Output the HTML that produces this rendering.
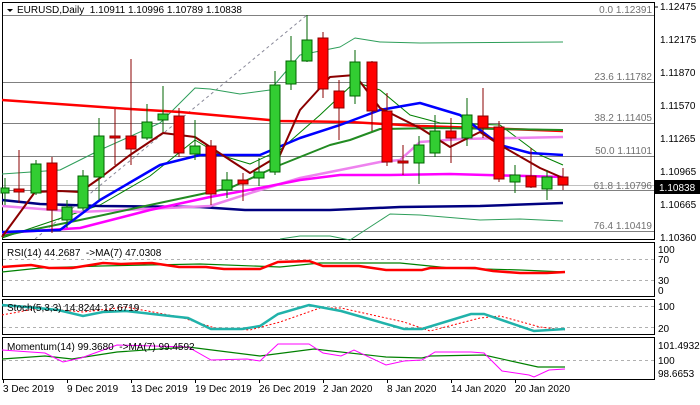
<!DOCTYPE html><html><head><meta charset="utf-8"><style>
body{margin:0;width:700px;height:400px;background:#fff;overflow:hidden}
text{font-family:"Liberation Sans","DejaVu Sans",sans-serif;font-size:10px;fill:#000}
</style></head><body>
<svg width="700" height="400" xmlns="http://www.w3.org/2000/svg">
<g fill="none" stroke="#000" stroke-width="1">
<rect x="2.5" y="2.5" width="652" height="237"/>
<rect x="2.5" y="242.5" width="652" height="54"/>
<rect x="2.5" y="299.5" width="652" height="35"/>
<rect x="2.5" y="337.5" width="652" height="42"/>
</g>
<g stroke="#808080" stroke-width="1">
<line x1="3" y1="15.5" x2="654" y2="15.5"/><line x1="3" y1="82.5" x2="654" y2="82.5"/>
<line x1="3" y1="123.5" x2="654" y2="123.5"/><line x1="3" y1="156.5" x2="654" y2="156.5"/>
<line x1="3" y1="190.5" x2="654" y2="190.5"/><line x1="3" y1="231.5" x2="654" y2="231.5"/>
</g>
<line x1="3" y1="185.5" x2="654" y2="185.5" stroke="#c0c0c0"/>
<line x1="35" y1="239" x2="307" y2="15" stroke="#8a8a9a" stroke-dasharray="3,3"/>
<g text-anchor="end"><text x="652" y="13" style="fill:#707070">0.0 1.12391</text>
<text x="652" y="80" style="fill:#707070">23.6 1.11782</text><text x="652" y="121" style="fill:#707070">38.2 1.11405</text>
<text x="652" y="154" style="fill:#707070">50.0 1.11101</text><text x="652" y="189" style="fill:#707070">61.8 1.10796</text>
<text x="652" y="229" style="fill:#707070">76.4 1.10419</text></g>
<g fill="none" stroke-linejoin="round">
<polyline stroke="#2e9e5a" stroke-width="1" points="2,174 60,170 100,150 160,123 195,88 210,89 240,94 270,90 300,55 340,47 355,38 380,42 420,43 563,42"/>
<polyline stroke="#2e9e5a" stroke-width="1" points="280,239 300,236 330,236 350,240 390,214 420,215 480,220 520,219 563,221"/>
<polyline stroke="#008000" stroke-width="1" points="2,238 100,205 150,176 195,140 220,155 250,164 280,150 320,115 355,82 380,90 410,115 440,123 500,125 540,155 563,165"/>
<polyline stroke="#ff0000" stroke-width="2.5" points="2,100 130,109 180,112 280,121 350,122 420,126 480,128 563,131"/>
<polyline stroke="#000080" stroke-width="2.5" points="2,200 40,204 100,206 200,207 245,210 330,210 400,207 480,206 563,203"/>
<polyline stroke="#ee82ee" stroke-width="2.5" points="2,206 80,212 210,206 260,190 300,178 340,170 380,162 400,160 420,142 460,139 563,137"/>
<polyline stroke="#ff00ff" stroke-width="2.5" points="2,233 80,228 150,210 210,197 260,188 300,180 340,175 390,175 450,174 563,177"/>
<polyline stroke="#228b22" stroke-width="2" points="2,236 80,220 150,205 230,188 280,165 330,145 350,140 380,129 440,128 563,130"/>
<polyline stroke="#0000ff" stroke-width="2.5" points="2,232 60,230 100,200 160,165 200,155 260,155 300,138 340,125 380,110 420,103 460,115 500,145 530,153 563,155"/>
<polyline stroke="#8b0000" stroke-width="2" points="2,237 35,192 60,191 80,192 100,178 130,155 163,133 195,137 230,160 250,173 280,155 300,110 330,77 355,75 380,108 420,128 450,147 480,132 500,145 540,168 563,178"/>
</g>
<g stroke-width="1">
<g stroke="#006400" fill="#32cd32">
<line x1="5" y1="178" x2="5" y2="205"/><rect x="1" y="188" width="8" height="5"/>
<line x1="36" y1="160" x2="36" y2="195"/><rect x="31" y="164" width="10" height="29"/>
<line x1="67" y1="200" x2="67" y2="228"/><rect x="62" y="207" width="10" height="13"/>
<line x1="83" y1="170" x2="83" y2="210"/><rect x="78" y="176" width="10" height="32"/>
<line x1="99" y1="118" x2="99" y2="200"/><rect x="94" y="136" width="10" height="41"/>
<line x1="147" y1="104" x2="147" y2="140"/><rect x="142" y="122" width="10" height="16"/>
<line x1="163" y1="86" x2="163" y2="132"/><rect x="158" y="114" width="10" height="6"/>
<line x1="195" y1="120" x2="195" y2="160"/><rect x="190" y="146" width="10" height="8"/>
<line x1="227" y1="172" x2="227" y2="198"/><rect x="222" y="180" width="10" height="10"/>
<line x1="259" y1="158" x2="259" y2="186"/><rect x="254" y="172" width="10" height="6"/>
<line x1="275" y1="71" x2="275" y2="175"/><rect x="270" y="85" width="10" height="87"/>
<line x1="291" y1="36" x2="291" y2="90"/><rect x="286" y="61" width="10" height="23"/>
<line x1="307" y1="15" x2="307" y2="62"/><rect x="302" y="40" width="10" height="21"/>
<line x1="355" y1="50" x2="355" y2="104"/><rect x="350" y="62" width="10" height="34"/>
<line x1="419" y1="136" x2="419" y2="184"/><rect x="414" y="145" width="10" height="18"/>
<line x1="435" y1="115" x2="435" y2="157"/><rect x="430" y="131" width="10" height="22"/>
<line x1="467" y1="98" x2="467" y2="146"/><rect x="462" y="115" width="10" height="23"/>
<line x1="515" y1="165" x2="515" y2="193"/><rect x="510" y="175" width="10" height="7"/>
<line x1="547" y1="170" x2="547" y2="200"/><rect x="542" y="177" width="10" height="12"/>
</g>
<g stroke="#8b0000" fill="#ff0000">
<line x1="19" y1="150" x2="19" y2="203"/><rect x="14" y="189" width="10" height="3"/>
<line x1="52" y1="157" x2="52" y2="233"/><rect x="47" y="163" width="10" height="47"/>
<line x1="115" y1="109" x2="115" y2="165"/><rect x="110" y="136" width="10" height="2"/>
<line x1="131" y1="59" x2="131" y2="165"/><rect x="126" y="136" width="10" height="13"/>
<line x1="179" y1="108" x2="179" y2="157"/><rect x="174" y="116" width="10" height="37"/>
<line x1="211" y1="140" x2="211" y2="205"/><rect x="206" y="146" width="10" height="48"/>
<line x1="243" y1="173" x2="243" y2="201"/><rect x="238" y="180" width="10" height="4"/>
<line x1="323" y1="32" x2="323" y2="98"/><rect x="318" y="38" width="10" height="51"/>
<line x1="339" y1="80" x2="339" y2="140"/><rect x="334" y="91" width="10" height="17"/>
<line x1="372" y1="61" x2="372" y2="131"/><rect x="367" y="62" width="10" height="49"/>
<line x1="387" y1="93" x2="387" y2="166"/><rect x="382" y="111" width="10" height="51"/>
<line x1="403" y1="145" x2="403" y2="175"/><rect x="398" y="161" width="10" height="2"/>
<line x1="451" y1="118" x2="451" y2="163"/><rect x="446" y="131" width="10" height="7"/>
<line x1="483" y1="88" x2="483" y2="138"/><rect x="478" y="116" width="10" height="12"/>
<line x1="499" y1="121" x2="499" y2="182"/><rect x="494" y="127" width="10" height="52"/>
<line x1="531" y1="148" x2="531" y2="188"/><rect x="526" y="176" width="10" height="11"/>
<line x1="563" y1="168" x2="563" y2="190"/><rect x="558" y="177" width="10" height="8"/>
</g></g>
<polygon points="7,9 13,9 10,12" fill="#000"/>
<text x="17" y="13">EURUSD,Daily&#160; 1.10911 1.10996 1.10789 1.10838</text>
<g><line x1="655" y1="7" x2="658" y2="7" stroke="#000"/>
<text x="660" y="10">1.12475</text><text x="660" y="43">1.12175</text><text x="660" y="76">1.11870</text>
<text x="660" y="109">1.11570</text><text x="660" y="142">1.11265</text><text x="660" y="175">1.10965</text>
<text x="660" y="208">1.10665</text><text x="660" y="241">1.10360</text></g>
<rect x="655" y="180" width="45" height="14" fill="#000"/>
<text x="659" y="191" style="fill:#fff">1.10838</text>
<g stroke="#b0b0b0" stroke-dasharray="3,3"><line x1="3" y1="259.5" x2="654" y2="259.5"/><line x1="3" y1="280.5" x2="654" y2="280.5"/>
<line x1="3" y1="306.5" x2="654" y2="306.5"/><line x1="3" y1="327.5" x2="654" y2="327.5"/><line x1="3" y1="360.5" x2="654" y2="360.5"/></g>
<polyline fill="none" stroke="#008000" stroke-width="1.2" points="2,272 40,268 100,266 200,264 280,267 320,263 400,263 450,268 520,270 565,272"/>
<polyline fill="none" stroke="#ff0000" stroke-width="2.5" points="2,267 31,265 49,268 72,268 103,263 121,264 152,263 179,267 206,267 224,269 260,269 278,262 309,261 323,266 359,266 386,270 422,270 430,268 475,268 493,271 520,273 547,273 565,272"/>
<text x="7" y="256">RSI(14) 44.2687&#160; -&gt;MA(7) 47.0308</text>
<text x="658" y="253">100</text><text x="658" y="263">70</text><text x="658" y="284">30</text><text x="658" y="294">0</text>
<polyline fill="none" stroke="#ff0000" stroke-width="1" stroke-dasharray="2,2" points="2,315 40,308 83,312 126,307 180,317 215,328 250,330 280,322 320,308 341,308 404,322 430,331 480,318 500,316 540,327 565,330"/>
<polyline fill="none" stroke="#20b2aa" stroke-width="2.5" points="2,305 27,307 58,310 83,316 103,312 126,311 170,316 188,318 211,329 242,329 260,326 278,314 309,305 341,311 404,329 422,329 471,314 484,314 534,331 565,329"/>
<text x="7" y="311">Stoch(5,3,3) 14.8244 12.6719</text>
<text x="658" y="310">100</text><text x="658" y="332">20</text>
<polyline fill="none" stroke="#008000" stroke-width="1.2" points="2,359 45,356 72,359 117,352 188,347 260,356 314,349 386,357 422,358 430,356 484,355 538,367 565,367"/>
<polyline fill="none" stroke="#ff00ff" stroke-width="1" points="2,350 45,353 63,362 81,358 117,345 188,347 211,360 247,359 260,361 278,344 309,344 323,353 341,356 354,350 386,365 404,361 422,360 435,352 471,352 484,353 502,371 529,375 534,377 549,370 565,369"/>
<text x="7" y="350">Momentum(14) 99.3680&#160; -&gt;MA(7) 99.4592</text>
<text x="658" y="349">101.4932</text><text x="658" y="364">100</text><text x="658" y="377">98.6653</text>
<g stroke="#000"><line x1="3.5" y1="379" x2="3.5" y2="383"/><line x1="67.5" y1="379" x2="67.5" y2="383"/><line x1="131.5" y1="379" x2="131.5" y2="383"/><line x1="195.5" y1="379" x2="195.5" y2="383"/><line x1="259.5" y1="379" x2="259.5" y2="383"/><line x1="323.5" y1="379" x2="323.5" y2="383"/><line x1="387.5" y1="379" x2="387.5" y2="383"/><line x1="451.5" y1="379" x2="451.5" y2="383"/><line x1="515.5" y1="379" x2="515.5" y2="383"/></g>
<text x="3" y="392">3 Dec 2019</text><text x="67" y="392">9 Dec 2019</text><text x="131" y="392">13 Dec 2019</text>
<text x="195" y="392">19 Dec 2019</text><text x="259" y="392">26 Dec 2019</text><text x="323" y="392">2 Jan 2020</text>
<text x="387" y="392">8 Jan 2020</text><text x="451" y="392">14 Jan 2020</text><text x="515" y="392">20 Jan 2020</text>
</svg></body></html>
